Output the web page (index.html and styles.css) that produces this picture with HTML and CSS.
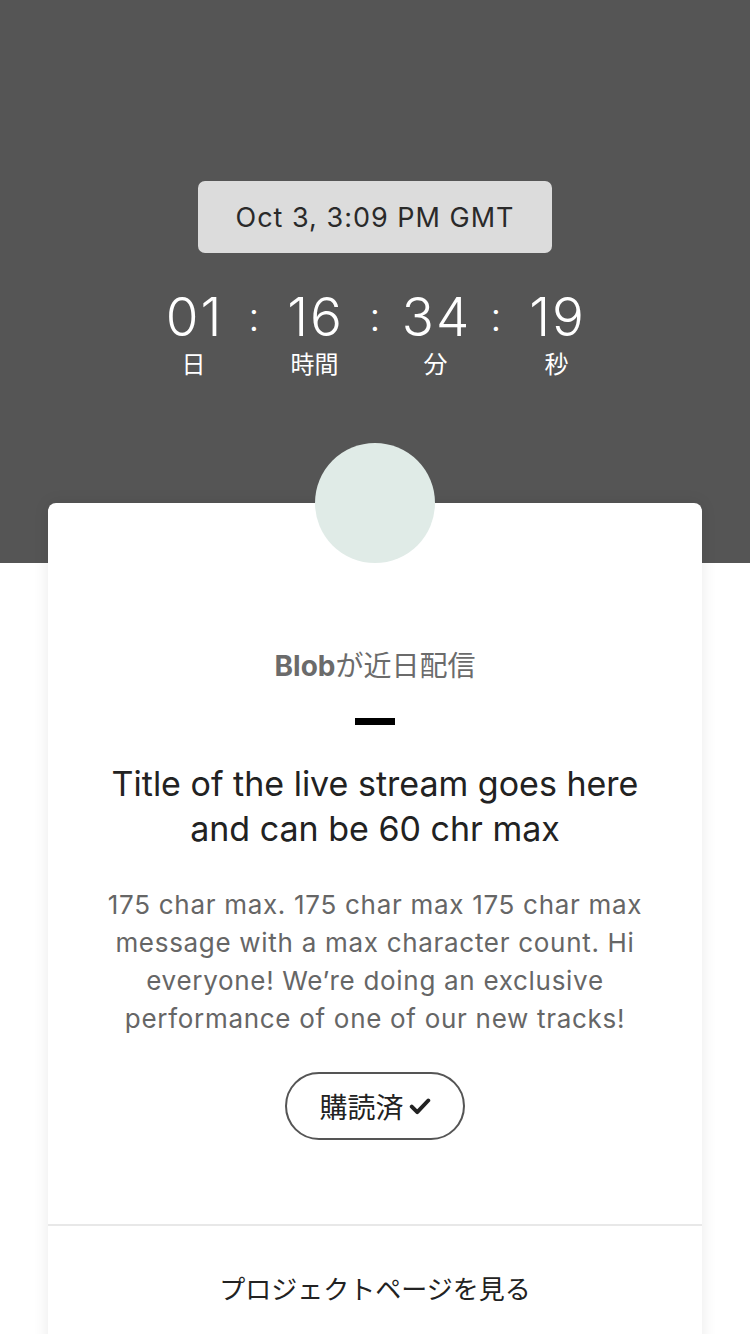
FILE: index.html
```html
<!DOCTYPE html>
<html lang="ja">
<head>
<meta charset="utf-8">
<link rel="stylesheet" href="styles.css">
</head>
<body>
<header class="hero">
  <div class="date-pill">Oct 3, 3:09 PM GMT</div>
  <div class="countdown">
    <div class="unit"><span class="num">01</span><span class="label">日</span></div>
    <div class="colon">:</div>
    <div class="unit"><span class="num">16</span><span class="label">時間</span></div>
    <div class="colon">:</div>
    <div class="unit"><span class="num">34</span><span class="label">分</span></div>
    <div class="colon">:</div>
    <div class="unit"><span class="num">19</span><span class="label">秒</span></div>
  </div>
</header>
<main class="card">
  <div class="avatar"></div>
  <div class="card-body">
    <p class="eyebrow"><b>Blob</b>が近日配信</p>
    <div class="dash"></div>
    <h1 class="title">Title of the live stream goes here and can be 60 chr max</h1>
    <p class="desc">175 char max. 175 char max 175 char max message with a max character count. Hi everyone! We’re doing an exclusive performance of one of our new tracks!</p>
    <button class="sub-btn">購読済<svg class="check" viewBox="0 0 20 20" width="22" height="22"><path d="M2.5 10.5 L7.5 15.5 L17.5 5" fill="none" stroke="#222" stroke-width="3.6" stroke-linecap="round" stroke-linejoin="round"/></svg></button>
  </div>
  <div class="card-footer">プロジェクトページを見る</div>
</main>
</body>
</html>
```

FILE: styles.css
```css
* { box-sizing: border-box; }
html, body { margin: 0; padding: 0; }
body {
  background: #fff;
  font-family: "Inter", "Noto Sans CJK JP", sans-serif;
  width: 750px;
  height: 1334px;
  overflow: hidden;
}
.hero {
  background: #555555;
  height: 563px;
  padding-top: 181px;
  display: flex;
  flex-direction: column;
  align-items: center;
}
.date-pill {
  width: 354px;
  height: 72px;
  background: #dcdcdc;
  border-radius: 7px;
  display: flex;
  align-items: center;
  justify-content: center;
  font-size: 27px;
  color: #2a2a2a;
  letter-spacing: 1px;
}
.countdown {
  margin-top: 34px;
  display: flex;
  color: #fff;
}
.unit {
  width: 80px;
  display: flex;
  flex-direction: column;
  align-items: center;
}
.num {
  font-size: 53px;
  line-height: 60px;
  font-weight: 300;
  letter-spacing: 2px;
  padding-left: 2px;
}
.label {
  font-size: 24px;
  line-height: 30px;
  margin-top: 3px;
}
.colon {
  width: 41px;
  text-align: center;
  font-size: 40px;
  line-height: 60px;
  font-weight: 300;
}
.card {
  margin: -60px 48px 0;
  background: #fff;
  border-radius: 8px 8px 0 0;
  box-shadow: 0 0 16px rgba(0, 0, 0, 0.09);
  min-height: 900px;
  display: flex;
  flex-direction: column;
  align-items: center;
}
.avatar {
  width: 120px;
  height: 120px;
  border-radius: 50%;
  background: #e0ebe7;
  margin-top: -60px;
}
.card-body {
  padding: 86px 44px 0;
  display: flex;
  flex-direction: column;
  align-items: center;
  text-align: center;
  width: 100%;
  border-bottom: 2px solid #e8e8e8;
  padding-bottom: 84px;
}
.eyebrow {
  margin: 0;
  font-size: 28px;
  line-height: 34px;
  color: #6b6b6b;
}
.eyebrow b { font-weight: 700; }
.dash {
  width: 40px;
  height: 7px;
  background: #000;
  margin-top: 35px;
}
.title {
  margin: 36px 0 0;
  max-width: 540px;
  font-size: 34px;
  line-height: 45px;
  font-weight: 400;
  color: #222;
}
.desc {
  margin: 35px 0 0;
  font-size: 26px;
  line-height: 38px;
  letter-spacing: 0.7px;
  color: #666;
}
.sub-btn {
  margin-top: 34px;
  width: 180px;
  height: 68px;
  border: 2px solid #555;
  border-radius: 34px;
  background: #fff;
  font-family: inherit;
  font-size: 28px;
  color: #222;
  display: flex;
  align-items: center;
  justify-content: center;
  gap: 5px;
  padding: 0;
}
.check { display: block; }
.card-footer {
  width: 100%;
  text-align: center;
  font-size: 26px;
  color: #222;
  font-weight: 400;
  padding-top: 47px;
  line-height: 34px;
}
```
